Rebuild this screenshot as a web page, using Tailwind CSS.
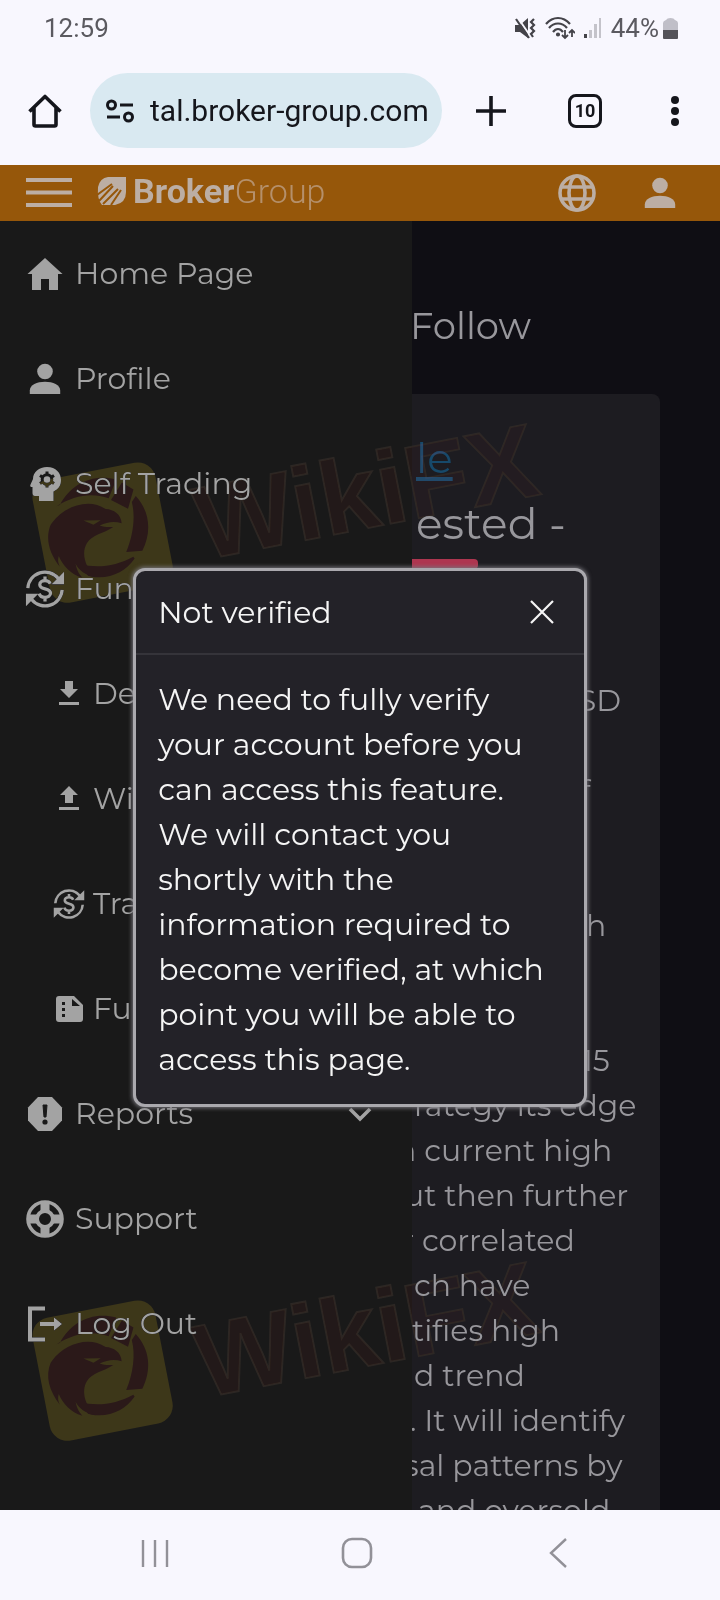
<!DOCTYPE html>
<html lang="en">
<head>
  <meta charset="UTF-8" />
  <meta name="viewport" content="width=device-width, initial-scale=1.0" />
  <title>Broker Group</title>
  <script src="https://cdn.jsdelivr.net/npm/@tailwindcss/browser@4"></script>
</head>
<body class="h-screen flex flex-col overflow-hidden bg-[#f8f7fe] font-['Montserrat','Inter',sans-serif]">

  <!-- Icons used more than once -->
  <svg class="hidden">
    <symbol id="person" viewBox="0 0 32 32">
      <circle cx="16" cy="8.500" r="7.800" /><path d="M.8 31v-3.500C.8 22 8 18.800 16 18.800S31.200 22 31.200 27.500V31z" />
    </symbol>
    <symbol id="exchange" viewBox="0 0 42 42">
      <g fill="none" stroke="currentColor" stroke-width="3.400">
        <path d="M3 20A18 18 0 0 1 35 10M39 22A18 18 0 0 1 7 32" />
        <path d="M26.500 15.500c-1-2.500-3-3.300-5.500-3.300-3.300 0-5.500 1.700-5.500 4.300 0 5.800 11.300 2.800 11.300 8.800 0 2.800-2.500 4.500-5.800 4.500-3 0-5.200-1.300-6.200-4M21 8v5M21 29.500V34" />
      </g>
      <path d="M41 3v13H28l4.500-4.500zM1 39V26h13l-4.500 4.500z" />
    </symbol>
    <symbol id="watermark" viewBox="0 0 560 220">
      <g transform="rotate(-11 103 132)">
        <rect x="40" y="70" width="125" height="125" rx="18" fill="#3d3717" />
        <g fill="#2b1916">
          <path d="M66 97c14-18 38-25 60-14l-11 17c-15-9-33-10-53-2z" />
          <path d="M131 87l10 9-9 18-15-12z" />
          <path d="M142 103c11 18 9 38-4 55l-16-2c10-15 16-33 15-48z" />
          <path d="M129 164c-12 12-32 17-49 8l-6-13c17 8 35 9 54 3z" />
          <path d="M55 113c14-13 40-18 55-3 8 2 14 8 13 17-7-4-14-4-22-2 5 3 8 3 13 4-11 5-22 3-29 11-8 9-6 24 2 35-9-3-15-10-17-17 0 6 1 10 4 15-11-6-17-16-19-26-2 4-2 7-1 11-8-16-9-31-1-43z" />
        </g>
        <path d="M86 117l17 3-8 3z" fill="#3d3717" />
      </g>
      <text x="203" y="160" transform="rotate(-11 203 160)" font-family="Liberation Sans" font-weight="bold" font-size="104" fill="#261612" fill-opacity=".75" stroke="#352e29" stroke-opacity=".7" stroke-width="2">WikiFX</text>
    </symbol>
  </svg>

  <!-- Phone status bar -->
  <div class="h-14 shrink-0 flex items-center justify-between pl-11 pr-[42px] font-['Roboto',sans-serif] text-[26px] text-[#5b5a60]">
    <span>12:59</span>
    <div class="flex items-center gap-1">
      <svg class="w-[22px] h-[22px]" viewBox="0 0 22 22" fill="#444349">
        <path d="M0 8h5l8-7v20l-8-6H0z" />
        <path d="M3 1l13 19" stroke="#f8f7fe" stroke-width="2" /><path d="M1 2l13 19M19 2l-3 3 3 3-3 3 3 3-3 3 2 3" fill="none" stroke="#444349" stroke-width="2.200" />
      </svg>
      <svg class="ml-1 w-[30px] h-[24px]" viewBox="0 0 30 24" fill="none" stroke="#444349" stroke-width="2.200">
        <path d="M1 8C8 0 18 0 25 8M4 12c5-6 13-6 18 0M8 16c3-4 7-4 10 0" /><circle cx="13" cy="18.500" r="1" />
        <path d="M20 14v8m-3-3l3 3 3-3M27 21v-7m-3 3l3-3 3 3" stroke-width="1.800" />
      </svg>
      <svg class="ml-1 w-[20px] h-[22px]" viewBox="0 0 20 22">
        <path d="M1 17h3v4H1z" fill="#444349" /><path d="M6 13h3v8H6zM11 7h3v14h-3zM16 1h2v20h-2z" fill="#c4c3ca" />
      </svg>
      <span class="ml-1">44%</span>
      <svg class="w-[15px] h-[22px]" viewBox="0 0 15 22"><path d="M0 21V6q0-2 3-3Q4 1 7.500 1T12 3q3 1 3 3v15z" fill="#c0bfc8" /><path d="M0 13h15v8q0 1-1 1H1q-1 0-1-1z" fill="#545359" /></svg>
    </div>
  </div>

  <!-- Browser toolbar -->
  <div class="h-[109px] shrink-0 flex items-center px-7 font-['Roboto',sans-serif] text-[#15161c]">
    <button aria-label="Home" class="w-[34px]">
      <svg class="w-[34px] h-[34px]" viewBox="0 0 34 34" fill="none" stroke="currentColor" stroke-width="3.600" stroke-linejoin="round"><path d="M1.500 17.500L17 2.500l15.500 15M6 14v16.500q0 1.500 1.500 1.500h19q1.500 0 1.500-1.500V14" /></svg>
    </button>
    <div class="ml-7 h-[75px] min-w-0 flex-1 flex items-center gap-4 rounded-full bg-[#d9e9f1] pl-4 pr-3">
      <svg class="w-[28px] h-[24px] shrink-0" viewBox="0 0 28 24" fill="none" stroke="currentColor" stroke-width="3"><circle cx="5.500" cy="6" r="4" /><circle cx="22.500" cy="18" r="4" /><path d="M14 6h13M1 18h13" /></svg>
      <input aria-label="Address" value="tal.broker-group.com" class="min-w-0 flex-1 bg-transparent text-[30px] outline-none" />
    </div>
    <button aria-label="New tab" class="ml-8 w-[34px]">
      <svg class="w-[34px] h-[34px]" viewBox="0 0 34 34" stroke="currentColor" stroke-width="3.600"><path d="M2 17h30M17 2v30" /></svg>
    </button>
    <button aria-label="Tabs" class="ml-[60px] size-[34px] rounded-lg border-[3px] border-current text-[18px] leading-none font-bold">10</button>
    <button aria-label="Menu" class="ml-14 w-[34px]">
      <svg class="w-[34px] h-[34px]" viewBox="0 0 34 34" fill="currentColor"><circle cx="17" cy="6" r="4" /><circle cx="17" cy="17" r="4" /><circle cx="17" cy="28" r="4" /></svg>
    </button>
  </div>

  <!-- Web page -->
  <div class="relative flex-1 min-h-0 flex flex-col overflow-hidden bg-[#0f0e14]">

    <header class="h-14 shrink-0 flex items-center bg-[#96570a] pl-6 pr-11 text-[#bcaea4]">
      <button aria-label="Toggle menu">
        <svg class="w-12 h-[32px]" viewBox="0 0 48 32" stroke="currentColor" stroke-width="4"><path d="M2 3h46M2 15.500h46M2 28h46" /></svg>
      </button>
      <a href="#" class="ml-[25px] mb-1 flex items-center font-['Roboto',sans-serif] text-[34px] leading-none">
        <svg class="mr-1.5 w-[30px] h-[30px]" viewBox="0 0 30 30">
          <path d="M29 1H11Q3 2 1 11q-1 12 4 18h13q11-2 11-13z" fill="currentColor" />
          <path d="M0 19L15 8M2 25l14-15M6 28l15-15M14 29l10-15" stroke="#96570a" stroke-width="2" />
        </svg>
        <span class="font-bold">Broker</span><span class="font-light text-[#b5906b]">Group</span>
      </a>
      <button aria-label="Language" class="ml-auto">
        <svg class="w-[38px] h-[38px]" viewBox="0 0 38 38" fill="none" stroke="currentColor" stroke-width="3.600"><circle cx="19" cy="19" r="17" /><ellipse cx="19" cy="19" rx="8" ry="17" /><path d="M3 13h32M3 25h32" /></svg>
      </button>
      <button aria-label="Account" class="ml-12">
        <svg class="w-8 h-8" fill="currentColor"><use href="#person" /></svg>
      </button>
    </header>

    <div class="flex-1 min-h-0 flex">
      <nav class="w-[412px] shrink-0 bg-[#191919] text-[30px] text-[#a3a3a3]">
        <a href="#" class="h-[105px] flex items-center gap-2.5 pl-[25px]">
          <svg class="w-10 h-10" viewBox="0 0 40 40" fill="currentColor"><path d="M20 4L2.500 20H7v16h9V25h8v11h9V20h4.500z" /></svg>Home Page
        </a>
        <a href="#" class="h-[105px] flex items-center gap-2.5 pl-[25px]">
          <span class="w-10 flex justify-center"><svg class="w-8 h-8" fill="currentColor"><use href="#person" /></svg></span>Profile
        </a>
        <a href="#" class="h-[105px] flex items-center gap-2.5 pl-[25px]">
          <svg class="w-10 h-10" viewBox="0 0 40 40">
            <path d="M22 3c9 0 14 6 14 13 0 6-2.500 9-7.500 11.500V37H14v-5h-4q-2.500 0-2.500-3v-6H6q-1.500-1-.5-2.500L8 15C8 8 14 3 22 3z" fill="currentColor" />
            <circle cx="22" cy="15.500" r="4.800" fill="none" stroke="#191919" stroke-width="3" /><path d="M22 7.500v3M22 20.500v3M15 11.500l3 2M26 17.500l3 2M15 19.500l3-2M26 13.500l3-2" stroke="#191919" stroke-width="3" />
          </svg>Self Trading
        </a>
        <a href="#" class="h-[105px] flex items-center gap-2.5 pl-[25px]">
          <svg class="w-10 h-10" fill="currentColor"><use href="#exchange" /></svg>Funds
        </a>
        <a href="#" class="h-[105px] flex items-center gap-2 pl-[53px]">
          <svg class="w-8 h-8" viewBox="0 0 32 32" fill="currentColor"><path d="M12 3h8v8h5l-9 9-9-9h5zM6 24h20v3H6z" /></svg>Deposit
        </a>
        <a href="#" class="h-[105px] flex items-center gap-2 pl-[53px]">
          <svg class="w-8 h-8" viewBox="0 0 32 32" fill="currentColor"><path d="M16 3l9 9h-5v8h-8v-8H7zM6 24h20v3H6z" /></svg>Withdraw
        </a>
        <a href="#" class="h-[105px] flex items-center gap-2 pl-[53px]">
          <svg class="w-8 h-8" fill="currentColor"><use href="#exchange" /></svg>Transfer
        </a>
        <a href="#" class="h-[105px] flex items-center gap-2 pl-[53px]">
          <svg class="w-8 h-8" viewBox="0 0 32 32" fill="currentColor"><path d="M6 3h15l9 9v14q0 3-3 3H6q-3 0-3-3V6q0-3 3-3z" /><path d="M19 6v7h8zM9 9h3v3H9zM9 15h3v3H9zM9 21h3v3H9z" fill="#191919" /></svg>Funds History
        </a>
        <a href="#" class="h-[105px] flex items-center gap-2.5 pl-[25px] pr-9">
          <svg class="w-10 h-10" viewBox="0 0 40 40"><path d="M13 3h14l10 10.500v13L27 37H13L3 26.500v-13z" fill="currentColor" /><path d="M18 11h4l-1 12h-2z" fill="#191919" stroke="#191919" /><circle cx="20" cy="28" r="2.600" fill="#191919" /></svg>Reports
          <svg class="ml-auto w-8 h-8" viewBox="0 0 32 32" fill="none" stroke="currentColor" stroke-width="3.600"><path d="M6 11l10 10 10-10" /></svg>
        </a>
        <a href="#" class="h-[105px] flex items-center gap-2.5 pl-[25px]">
          <svg class="w-10 h-10" viewBox="0 0 40 40" fill="none" stroke="currentColor"><circle cx="20" cy="20" r="17" stroke-width="3.600" /><circle cx="20" cy="20" r="8" stroke-width="4" /><path d="M20 3v10M20 27v10M3 20h10M27 20h10" stroke-width="9" /></svg>Support
        </a>
        <a href="#" class="h-[105px] flex items-center gap-2.5 pl-[25px]">
          <svg class="w-10 h-10" viewBox="0 0 40 40" fill="none" stroke="currentColor" stroke-width="4"><path d="M20 4.500H5v31h15" /><path d="M15 20h16" /><path d="M29 13.500l8 6.500-8 6.500z" fill="currentColor" stroke="none" /></svg>Log Out
        </a>
      </nav>

      <!-- Part of the page left uncovered by the open menu -->
      <main class="min-w-0 flex-1 overflow-hidden text-[30px] leading-[45px] text-[#98979c]">
        <h1 class="-ml-0.5 h-[173px] pt-[82px] text-[37px]">Follow</h1>
        <section class="mr-[60px] h-full rounded-tr-lg bg-[#1d1c21] pt-[42px] whitespace-nowrap">
          <a href="#" class="block pl-1 text-[42px] text-[#17496a] underline underline-offset-4 decoration-[4px]">le</a>
          <h2 class="pt-5 pl-1 text-[44px]">ested -</h2>
          <div class="mt-[13px] h-[10px] w-[66px] rounded-r bg-[#ae3650]"></div>
          <div class="mt-[109px]">
            <p class="pl-[142px]">USD</p>
            <p class="pl-[168px]">)</p>
            <p class="pl-[168px]">f</p>
            <p class="h-[90px]"></p>
            <p class="pl-[174px]">h</p>
            <p class="h-[90px]"></p>
            <p class="pl-[170px]">15</p>
            <p class="pl-0.5">rategy its edge</p>
            <p class="-ml-4">n current high</p>
            <p class="-ml-2">ut then further</p>
            <p class="-ml-2.5">r correlated</p>
            <p class="pl-0.5">ch have</p>
            <p>tifies high</p>
            <p class="pl-0.5">d trend</p>
            <p class="-ml-0.5">. It will identify</p>
            <p class="-ml-2">sal patterns by</p>
            <p class="pl-1.5">and oversold</p>
          </div>
        </section>
      </main>
    </div>

    <svg aria-hidden="true" class="absolute left-0 top-[235px] w-[560px] h-[220px] mix-blend-lighten pointer-events-none"><use href="#watermark" /></svg>
    <svg aria-hidden="true" class="absolute left-0 top-[1073px] w-[560px] h-[220px] mix-blend-lighten pointer-events-none"><use href="#watermark" /></svg>

    <!-- Modal -->
    <div class="absolute inset-0 flex items-center justify-center">
      <div role="dialog" aria-labelledby="modal-title" class="w-[63%] rounded-xl border-[3px] border-[#aaa9ae] bg-[#232228] text-[30px] text-[#f5f5f5] shadow-[0_0_4px_1px_#77767c]">
        <div class="flex h-[84px] items-center justify-between border-b-2 border-[#35343a] px-[22px]">
          <h3 id="modal-title">Not verified</h3>
          <button aria-label="Close" class="mr-2">
            <svg class="w-6 h-6" viewBox="0 0 24 24" stroke="currentColor" stroke-width="2.200"><path d="M1 1l22 22M23 1L1 23" /></svg>
          </button>
        </div>
        <p class="p-[22px] leading-[45px]">We need to fully verify<br />your account before you<br />can access this feature.<br />We will contact you<br />shortly with the<br />information required to<br />become verified, at which<br />point you will be able to<br />access this page.</p>
      </div>
    </div>
  </div>

  <!-- Phone navigation bar -->
  <div class="h-[90px] shrink-0 grid grid-cols-3 place-items-center pl-[54px] pr-[60px] pb-1 text-[#929198]">
    <button aria-label="Recent apps"><svg class="w-8 h-8" viewBox="0 0 32 32" stroke="currentColor" stroke-width="2.400"><path d="M4 3v27M16 3v27M28 3v27" /></svg></button>
    <button aria-label="Home screen"><svg class="w-8 h-8" viewBox="0 0 32 32" fill="none" stroke="currentColor" stroke-width="2.600"><rect x="2" y="2" width="28" height="28" rx="9" /></svg></button>
    <button aria-label="Back"><svg class="w-8 h-8" viewBox="0 0 32 32" fill="none" stroke="currentColor" stroke-width="2.400"><path d="M23 2L8 16l15 14" /></svg></button>
  </div>

</body>
</html>
